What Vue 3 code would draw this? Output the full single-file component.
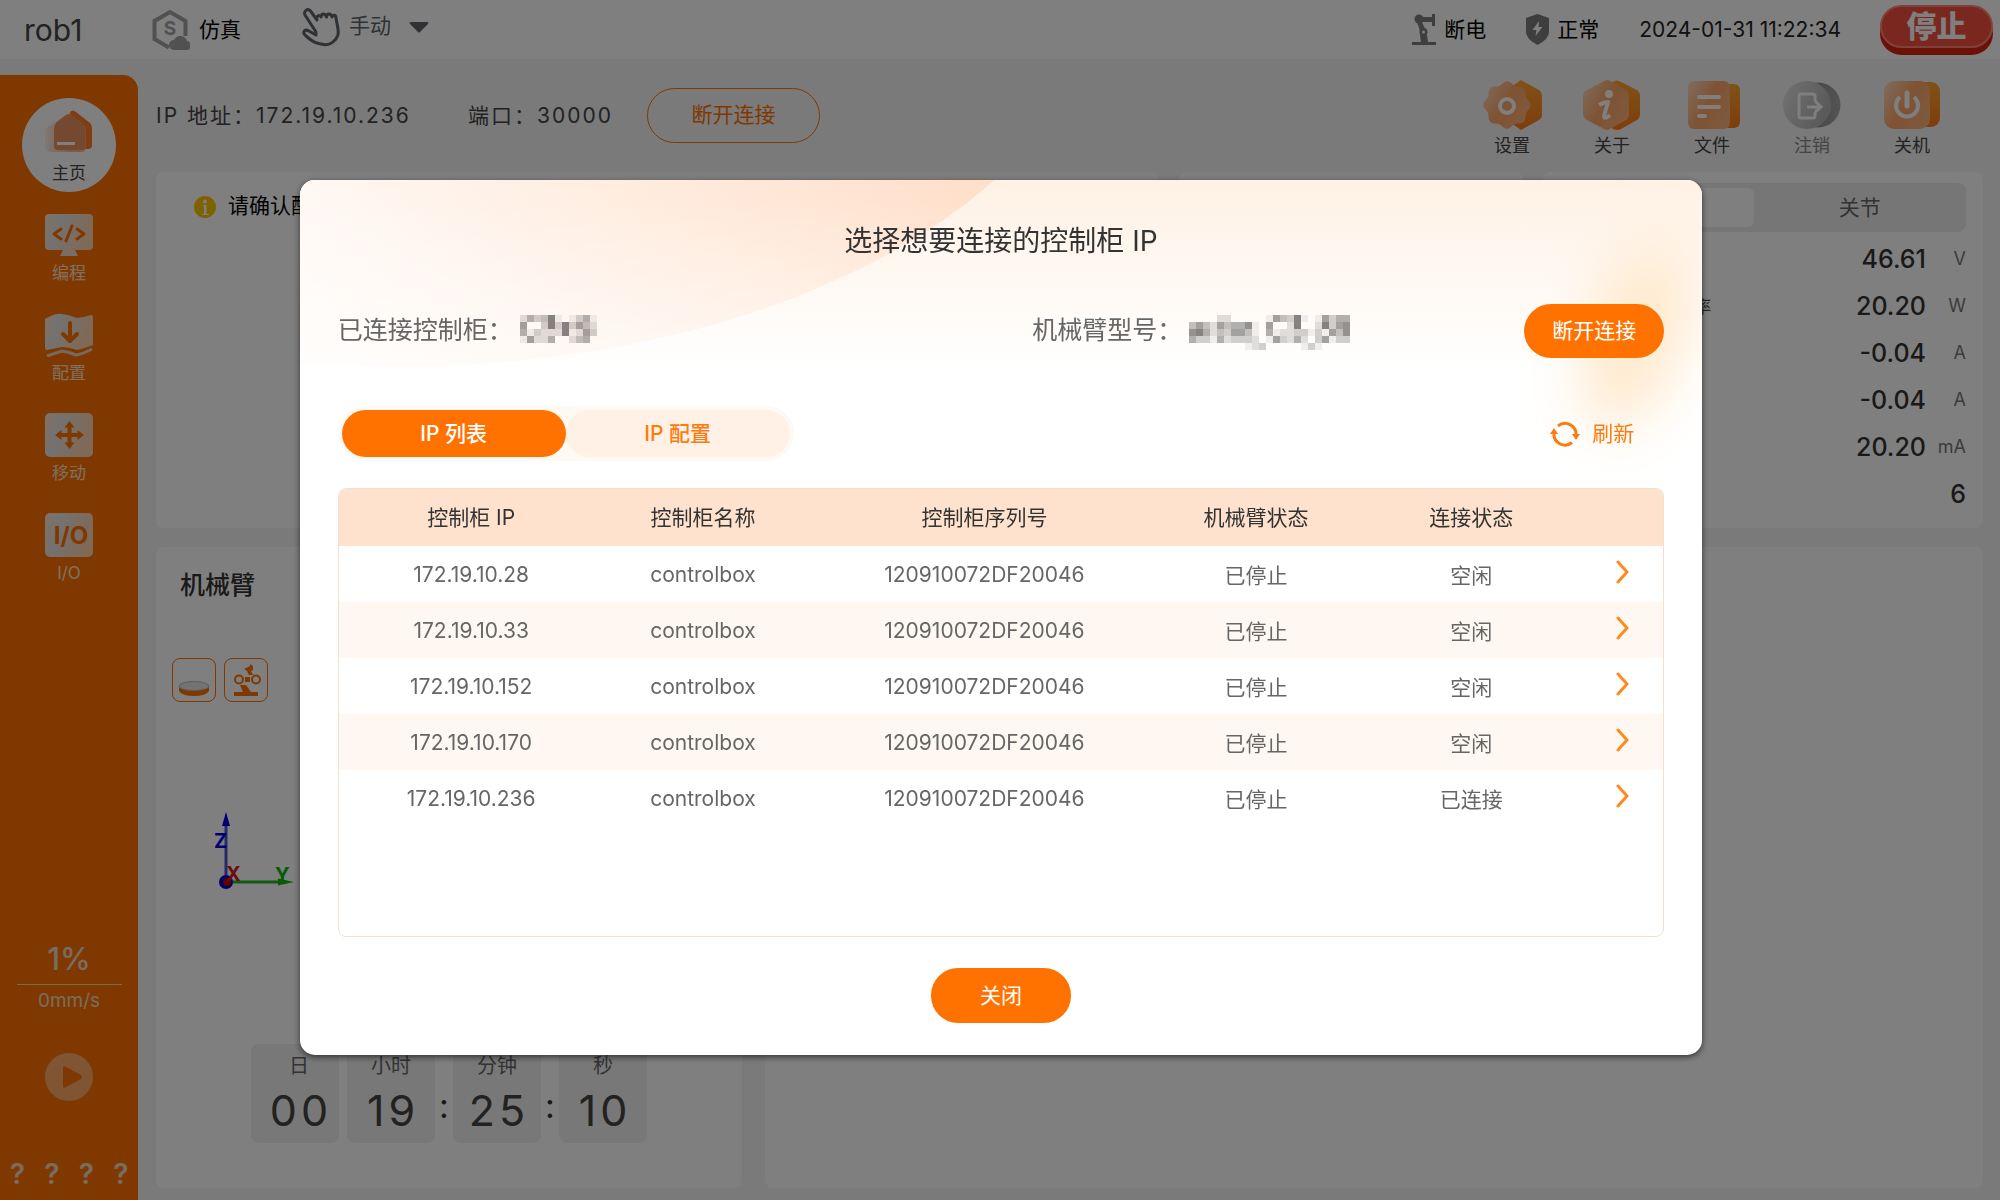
<script setup>
import { ref } from 'vue'

const mode = ref('手动')
const activeTab = ref('list')

const columns = ['控制柜 IP', '控制柜名称', '控制柜序列号', '机械臂状态', '连接状态']
const boxes = [
  { ip: '172.19.10.28', link: '空闲' },
  { ip: '172.19.10.33', link: '空闲' },
  { ip: '172.19.10.152', link: '空闲' },
  { ip: '172.19.10.170', link: '空闲' },
  { ip: '172.19.10.236', link: '已连接' },
].map((b) => ({ ...b, name: 'controlbox', serial: '120910072DF20046', arm: '已停止' }))

const readings = [
  { label: '', value: '46.61', unit: 'V' },
  { label: '功率', value: '20.20', unit: 'W' },
  { label: '', value: '-0.04', unit: 'A' },
  { label: '', value: '-0.04', unit: 'A' },
  { label: '', value: '20.20', unit: 'mA' },
  { label: '', value: '6', unit: '' },
]

// Redacted names: each digit is the darkness of one block
const toBlocks = (rows) =>
  rows.flatMap((row, y) => [...row].map((c, x) => ({ x: x * 7, y: y * 7, o: Number(c) * 0.06 })))
const cabinetMask = toBlocks(['25348101351', '60038383642', '51322281263', '16225002450'])
const armMask = toBlocks([
  '00002200000164381016355',
  '46426455710600280028367',
  '78524366410512233131647',
  '53315233320163252036133',
  '00000000123000001310000',
])

// Outline of the eight-lobed gear
const gearPath =
  Array.from({ length: 96 }, (_, i) => {
    const a = (i / 96) * Math.PI * 2
    const r = 22.2 + 1.6 * Math.cos(8 * a)
    return `${i ? 'L' : 'M'}${(25 + r * Math.cos(a)).toFixed(2)} ${(25 + r * Math.sin(a)).toFixed(2)}`
  }).join('') + 'Z'
</script>

<template>
  <div class="page">
    <svg class="defs" width="0" height="0" aria-hidden="true">
      <defs>
        <linearGradient id="gBack" x1="0" y1="0" x2="0" y2="1">
          <stop offset="0" stop-color="#ffa62e" /><stop offset="1" stop-color="#ff7a18" />
        </linearGradient>
        <linearGradient id="gFront" x1="0" y1="0" x2="1" y2="0.6">
          <stop offset="0" stop-color="#ffdcc0" /><stop offset="0.55" stop-color="#ffa566" /><stop offset="1" stop-color="#ffb27a" />
        </linearGradient>
        <linearGradient id="gGreyBack" x1="0" y1="0" x2="1" y2="0">
          <stop offset="0" stop-color="#777" /><stop offset="1" stop-color="#aaa" />
        </linearGradient>
        <linearGradient id="gGreyFront" x1="0" y1="0" x2="1" y2="0.4">
          <stop offset="0" stop-color="#e4e4e4" /><stop offset="1" stop-color="#b4b4b4" />
        </linearGradient>
        <linearGradient id="gPlate" x1="0" y1="0" x2="1" y2="0.3">
          <stop offset="0" stop-color="#ffe3cc" /><stop offset="0.35" stop-color="#e8e4e0" /><stop offset="1" stop-color="#ffd2ae" />
        </linearGradient>
        <linearGradient id="gHome" x1="0" y1="0" x2="1" y2="0">
          <stop offset="0" stop-color="#f3a570" stop-opacity="0.15" /><stop offset="0.6" stop-color="#f3a570" stop-opacity="0.8" />
        </linearGradient>
      </defs>
    </svg>

    <header class="topbar">
      <span class="robot-name">rob1</span>
      <span class="sim">
        <svg width="38" height="42" viewBox="0 0 38 42" fill="none">
          <path d="M17 38.500L2.500 30V12L18 3L33.500 12V27" stroke="#a2a2a2" stroke-width="4" />
          <text x="18" y="26" text-anchor="middle" class="hex-letter">S</text>
          <path d="M22 41a5 5 0 0 1 0-10 7 7 0 0 1 13 1 4.500 4.500 0 0 1-1 9z" fill="#a2a2a2" />
        </svg>
        <span class="caption">仿真</span>
      </span>
      <label class="mode">
        <svg width="38" height="40" viewBox="0 0 38 40" fill="none" stroke="#5e6268" stroke-width="3" stroke-linecap="round" stroke-linejoin="round">
          <path d="M14 25L3 8C1.500 4.500 5.500 .5 8.500 4L15 13C14 9 17 7 19 10C19.500 6 23 6 24.500 10C25 6 29 6 30 10C31 7 34 8 34 11C35 18 37 22 36 28C34 34 28 38.500 22 37.500C16 37 12 36 4 29C0 26 2 22 6 23.500L14 28Z" />
        </svg>
        <span class="mode-box">
          <select v-model="mode" aria-label="运行模式">
            <option>手动</option>
          </select>
          <svg class="caret" width="20" height="12" viewBox="0 0 20 12"><path d="M2 1H18Q20 1 19 3L11 11Q10 12 9 11L1 3Q0 1 2 1Z" fill="#5e6268" /></svg>
        </span>
      </label>
      <span class="state arm-state">
        <svg width="24" height="31" viewBox="0 0 24 31" fill="#7c7c7c">
          <circle cx="7" cy="5" r="4.500" /><path d="M7 3H20V0H23V12H20V8H7Z" /><path d="M5 8H10L14 17H8Z" />
          <circle cx="11.500" cy="18" r="4" /><circle cx="11.500" cy="18" r="1.500" fill="#fff" /><path d="M8 21H15L16 28H24V31H0V28H9Z" />
        </svg>
        <span class="caption">断电</span>
      </span>
      <span class="state">
        <svg width="23" height="31" viewBox="0 0 23 31"><path d="M11.500 0L23 4V18Q23 25 11.500 31Q0 25 0 18V4Z" fill="#7c7c7c" /><path d="M13 7L6.500 16H10.500L9.500 22L16.500 13H12.500Z" fill="#fff" /></svg>
        <span class="caption">正常</span>
      </span>
      <time class="clock">2024-01-31 11:22:34</time>
      <button class="stop" type="button">停止</button>
    </header>

    <div class="body">
      <nav class="sidebar">
        <a class="nav-home" href="#home">
          <svg width="48" height="46" viewBox="0 0 48 46">
            <path d="M25 2Q28-1 31 2L45 13Q47 15 47 18V35Q47 39 43 39H22Z" fill="#ff7a22" />
            <path d="M18 7Q23 1 28 6L38 14Q41 16 41 20V37Q41 42 36 42H6Q0 42 0 35V22Q0 18 6 15Z" fill="url(#gHome)" />
            <path d="M20 6Q24 3 28 6L37 13Q40 15 40 19V36Q40 40 36 40H13Q9 40 9 36V19Q9 15 12 12Z" fill="#e8935f" />
            <path d="M12 33.500H30" stroke="#fff" stroke-width="3" />
          </svg>
          <span>主页</span>
        </a>
        <a class="nav-item" href="#program">
          <svg width="48" height="44" viewBox="0 0 48 44" fill="none">
            <rect x="0" y="1" width="48" height="36" rx="4" fill="url(#gPlate)" />
            <path d="M18 37H30L33 43H15Z" fill="#f3dcc8" />
            <path d="M16 16L9 21L16 26M32 16L39 21L32 26M27 13L21 28" stroke="#ff7200" stroke-width="3" stroke-linecap="round" stroke-linejoin="round" />
          </svg>
          <span>编程</span>
        </a>
        <a class="nav-item" href="#config">
          <svg width="48" height="44" viewBox="0 0 48 44" fill="none">
            <path d="M0 6Q10 0 17 1Q25 2 32 5Q40 4 46 2Q48 2 48 5V32Q40 35 32 37Q24 34 17 34L2 37Q0 37 0 34Z" fill="url(#gPlate)" />
            <path d="M2 43L17 38Q24 39 31 42Q38 41 47 36" stroke="#ead3c0" stroke-width="3" />
            <path d="M25 10V27M18 21L25 28L32 21" stroke="#ff7200" stroke-width="4" stroke-linecap="round" stroke-linejoin="round" />
          </svg>
          <span>配置</span>
        </a>
        <a class="nav-item" href="#move">
          <svg width="48" height="44" viewBox="0 0 48 44">
            <rect width="48" height="44" rx="5" fill="url(#gPlate)" />
            <path d="M14 22H35M24.500 12V32" stroke="#ff7200" stroke-width="4" />
            <path d="M24.500 8L29.500 14.500H19.500ZM24.500 36L29.500 29.500H19.500ZM10 22L16.500 17V27ZM39 22L32.500 17V27Z" fill="#ff7200" />
          </svg>
          <span>移动</span>
        </a>
        <a class="nav-item" href="#io">
          <svg width="48" height="44" viewBox="0 0 48 44">
            <rect width="48" height="44" rx="5" fill="url(#gPlate)" />
            <text x="26" y="31" text-anchor="middle" class="io-letter">I/O</text>
          </svg>
          <span>I/O</span>
        </a>

        <div class="speed">
          <strong>1%</strong>
          <span>0mm/s</span>
        </div>
        <button class="play" type="button" aria-label="运行">
          <svg width="22" height="24" viewBox="0 0 22 24"><path d="M2 3Q2 0 5 2L20 10Q22 12 20 14L5 22Q2 24 2 21Z" fill="#ff7200" /></svg>
        </button>
        <div class="marks"><span v-for="n in 4" :key="n">?</span></div>
      </nav>

      <main class="content">
        <div class="toolbar">
          <div class="address">
            <span class="addr-ip">IP 地址：172.19.10.236</span>
            <span class="addr-port">端口：30000</span>
            <button class="outline" type="button">断开连接</button>
          </div>
          <div class="tools">
            <button type="button">
              <svg width="60" height="50" viewBox="0 0 60 50">
                <path d="M39 0L57 10Q60 12 60 15V35Q60 38 57 40L39 50L22 38V12Z" fill="url(#gBack)" />
                <path :d="gearPath" fill="url(#gFront)" /><circle cx="25" cy="26" r="7" fill="none" stroke="#fff" stroke-width="4" />
              </svg>
              设置
            </button>
            <button type="button">
              <svg width="60" height="50" viewBox="0 0 60 50">
                <path d="M31 2Q35-1 39 2L55 10Q58 12 58 16V34Q58 38 55 40L39 49Q35 51 31 49L20 40V10Z" fill="url(#gBack)" />
                <path d="M22 1Q25-1 28 1L44 10Q47 12 47 16V34Q47 38 44 40L28 49Q25 51 22 49L5 40Q1 38 1 34V16Q1 12 5 10Z" fill="url(#gFront)" />
                <circle cx="27" cy="14" r="4" fill="#fff" />
                <path d="M17 25Q22 22 26 22L22 36Q22 40 28 35" fill="none" stroke="#fff" stroke-width="4" stroke-linejoin="round" />
              </svg>
              关于
            </button>
            <button type="button">
              <svg width="60" height="50" viewBox="0 0 60 50">
                <rect x="22" y="4" width="36" height="44" rx="6" fill="url(#gBack)" />
                <rect x="6" y="1" width="42" height="48" rx="6" fill="url(#gFront)" />
                <path d="M17 17H37M17 27H37M17 36H23" stroke="#fff" stroke-width="4" stroke-linecap="round" />
              </svg>
              文件
            </button>
            <button type="button" class="muted" disabled>
              <svg width="60" height="50" viewBox="0 0 60 50">
                <circle cx="36" cy="25" r="22.500" fill="url(#gGreyBack)" /><circle cx="25" cy="25" r="24" fill="url(#gGreyFront)" />
                <path d="M33 21V16Q33 14 31 14H19Q17 14 17 16V36Q17 38 19 38H31Q33 38 33 36V32M25 27H38M33 21L39 27L33 32" fill="none" stroke="#fff" stroke-width="3" />
              </svg>
              注销
            </button>
            <button type="button">
              <svg width="60" height="50" viewBox="0 0 60 50">
                <rect x="20" y="2" width="38" height="45" rx="9" fill="url(#gBack)" />
                <rect x="2" y="1" width="46" height="48" rx="10" fill="url(#gFront)" />
                <path d="M18 17A11 11 0 1 0 32 17" fill="none" stroke="#fff" stroke-width="4" /><path d="M25 13V26" stroke="#fff" stroke-width="5" stroke-linecap="round" />
              </svg>
              关机
            </button>
          </div>
        </div>

        <div class="upper">
          <section class="card notice">
            <svg width="22" height="22" viewBox="0 0 22 22"><circle cx="11" cy="11" r="11" fill="#ffc400" /><circle cx="11" cy="5.500" r="2" fill="#fff" /><path d="M9 9H12.500V18H15V19H8V18H10V10H9Z" fill="#fff" /></svg>
            <p>请确认配</p>
          </section>
          <section class="card"></section>
          <section class="card readings">
            <div class="segment">
              <button type="button" class="on" aria-label="状态"></button>
              <button type="button">关节</button>
            </div>
            <dl>
              <div v-for="(r, i) in readings" :key="i">
                <dt>{{ r.label }}</dt>
                <dd>{{ r.value }}</dd>
                <dd v-if="r.unit" class="unit">{{ r.unit }}</dd>
              </div>
            </dl>
          </section>
        </div>

        <div class="lower">
          <section class="card arm">
            <h2>机械臂</h2>
            <div class="view-buttons">
              <button type="button" aria-label="底座">
                <svg width="32" height="36" viewBox="0 0 32 36"><path d="M1 24V29Q4 34 16 34Q28 34 31 29V24Z" fill="#ff7200" /><ellipse cx="16" cy="24" rx="15" ry="4.500" fill="#e6e6e6" stroke="#bbb" /></svg>
              </button>
              <button type="button" aria-label="机械臂视图">
                <svg width="30" height="36" viewBox="0 0 30 36">
                  <path d="M3 30H27V34H3ZM9 23H15L20 30H12ZM14 15H19V20H14ZM13 7L19 4V2L22 4V8L20 9L22 13H18L16 9Z" fill="#ff7200" />
                  <circle cx="8" cy="17.500" r="4" fill="none" stroke="#ff7200" stroke-width="2" /><circle cx="25" cy="17.500" r="4" fill="none" stroke="#ff7200" stroke-width="2" />
                </svg>
              </button>
            </div>
            <svg class="axes" width="84" height="80" viewBox="0 0 84 80">
              <path d="M16 70V12" stroke="#5050d8" stroke-width="3" /><path d="M16 0L20 14H12Z" fill="#0000e6" />
              <path d="M16 70H76" stroke="#20b820" stroke-width="3" /><path d="M84 70L68 66.500V73.500Z" fill="#0db80d" />
              <circle cx="16" cy="70" r="7" fill="#0000d0" /><circle cx="17" cy="70" r="4" fill="#c00000" />
              <text x="4" y="36" fill="#0000e6">Z</text><text x="16" y="69" fill="#e01818">X</text><text x="65" y="70" fill="#0db80d">Y</text>
            </svg>
            <div class="timer">
              <div class="tile"><span>日</span><b>00</b></div>
              <i class="gap"></i>
              <div class="tile"><span>小时</span><b>19</b></div>
              <i>:</i>
              <div class="tile"><span>分钟</span><b>25</b></div>
              <i>:</i>
              <div class="tile"><span>秒</span><b>10</b></div>
            </div>
          </section>
          <section class="card"></section>
        </div>
      </main>
    </div>

    <div class="overlay">
      <div class="modal" role="dialog" aria-modal="true" aria-labelledby="dialog-title">
        <svg class="modal-art" viewBox="0 0 1404 300" preserveAspectRatio="xMinYMin slice" aria-hidden="true">
          <defs>
            <linearGradient id="artTop" x1="0" y1="0" x2="0" y2="1">
              <stop offset="0" stop-color="#fff1e5" /><stop offset="1" stop-color="#fff" />
            </linearGradient>
            <linearGradient id="artArc" gradientUnits="userSpaceOnUse" x1="660" y1="0" x2="160" y2="330">
              <stop offset="0" stop-color="#ffe0cb" /><stop offset="1" stop-color="#fffaf6" />
            </linearGradient>
            <linearGradient id="artFade" gradientUnits="userSpaceOnUse" x1="0" y1="190" x2="0" y2="20">
              <stop offset="0" stop-color="#fff" stop-opacity=".6" /><stop offset="1" stop-color="#fff" stop-opacity="0" />
            </linearGradient>
            <filter id="artBlur" x="-150%" y="-60%" width="400%" height="220%"><feGaussianBlur stdDeviation="28" /></filter>
          </defs>
          <rect width="1404" height="190" fill="url(#artTop)" />
          <ellipse cx="102" cy="-214" rx="702" ry="400" fill="url(#artArc)" />
          <ellipse cx="102" cy="-214" rx="702" ry="400" fill="url(#artFade)" />
          <ellipse cx="1336" cy="156" rx="48" ry="96" transform="rotate(18 1336 156)" fill="#ffe9cd" filter="url(#artBlur)" />
        </svg>

        <h1 id="dialog-title">选择想要连接的控制柜 IP</h1>

        <div class="info">
          <div>
            <span class="caption">已连接控制柜：</span>
            <svg width="77" height="28" viewBox="0 0 77 28" shape-rendering="crispEdges"><rect v-for="(b, i) in cabinetMask" :key="i" :x="b.x" :y="b.y" width="7" height="7" :fill-opacity="b.o" /></svg>
          </div>
          <div>
            <span class="caption">机械臂型号：</span>
            <svg width="161" height="35" viewBox="0 0 161 35" shape-rendering="crispEdges"><rect v-for="(b, i) in armMask" :key="i" :x="b.x" :y="b.y" width="7" height="7" :fill-opacity="b.o" /></svg>
          </div>
          <button class="solid" type="button">断开连接</button>
        </div>

        <div class="tab-row">
          <div class="tabs" role="tablist">
            <button type="button" role="tab" :aria-selected="activeTab === 'list'" :class="{ on: activeTab === 'list' }" @click="activeTab = 'list'">IP 列表</button>
            <button type="button" role="tab" :aria-selected="activeTab === 'config'" :class="{ on: activeTab === 'config' }" @click="activeTab = 'config'">IP 配置</button>
          </div>
          <button class="refresh" type="button">
            <svg width="30" height="26" viewBox="0 0 30 26" fill="none" stroke="#ff7a0c" stroke-width="3">
              <path d="M8 5A11 11 0 0 1 26 14M22 21.500A11 11 0 0 1 4 12" />
              <path d="M22 13H30L26 19ZM0 13H8L4 7Z" fill="#ff7a0c" stroke="none" />
            </svg>
            <span class="caption">刷新</span>
          </button>
        </div>

        <div class="table-box">
          <table>
            <colgroup><col class="c1" /><col class="c2" /><col class="c3" /><col class="c4" /><col class="c5" /><col /></colgroup>
            <thead>
              <tr><th v-for="c in columns" :key="c" scope="col">{{ c }}</th><th></th></tr>
            </thead>
            <tbody>
              <tr v-for="b in boxes" :key="b.ip">
                <td>{{ b.ip }}</td><td>{{ b.name }}</td><td>{{ b.serial }}</td><td>{{ b.arm }}</td><td>{{ b.link }}</td>
                <td class="go">
                  <button type="button" :aria-label="'连接 ' + b.ip">
                    <svg width="14" height="24" viewBox="0 0 14 24"><path d="M2 2L11 12L2 22" fill="none" stroke="#ff8a1e" stroke-width="3" stroke-linecap="round" stroke-linejoin="round" /></svg>
                  </button>
                </td>
              </tr>
            </tbody>
          </table>
        </div>

        <button class="solid close" type="button">关闭</button>
      </div>
    </div>
  </div>
</template>

<style>
body {
  margin: 0;
  background: #f4f4f4;
}
</style>

<style scoped>
.page,
.page * {
  box-sizing: border-box;
}
.page {
  display: flex;
  flex-direction: column;
  min-height: 100vh;
  font-family: Inter, "Noto Sans CJK SC", sans-serif;
  font-size: 21px;
  color: #333;
  background: #f4f4f4;
}
.page button,
.page select {
  font: inherit;
  color: inherit;
  background: none;
  border: 0;
  padding: 0;
  margin: 0;
}
.page svg {
  display: block;
  flex: none;
}
.defs {
  position: absolute;
}
h1,
h2,
p,
dl,
dd {
  margin: 0;
}
.caption {
  padding-bottom: 4px;
}

/* top bar */
.topbar {
  display: flex;
  align-items: center;
  height: 59px;
  padding: 0 7px 0 24px;
  background: #fff;
  color: #000;
}
.robot-name {
  width: 128px;
  font-size: 30px;
  color: #444;
}
.sim {
  display: flex;
  align-items: center;
  gap: 9px;
  width: 150px;
}
.hex-letter {
  font-size: 19px;
  font-weight: 700;
  fill: #a2a2a2;
}
.mode {
  display: flex;
  align-items: center;
  gap: 9px;
  padding-bottom: 6px;
}
.mode-box {
  display: grid;
  align-items: center;
}
.page .mode-box select {
  grid-area: 1 / 1;
  width: 80px;
  padding-bottom: 2px;
  appearance: none;
  color: #5e6268;
}
.caret {
  grid-area: 1 / 1;
  justify-self: end;
  pointer-events: none;
}
.state {
  display: flex;
  align-items: center;
  gap: 8px;
  margin-right: 40px;
}
.arm-state {
  margin-left: auto;
}
.clock {
  margin-right: 39px;
  color: #222;
}
.page .stop {
  width: 113px;
  height: 43px;
  margin-bottom: 7px;
  border: 2px solid #ff8273;
  border-radius: 22px;
  background: #f4513f;
  box-shadow: 0 7px 0 #d8220f;
  color: #fff;
  font-size: 30px;
  font-weight: 900;
  line-height: 39px;
}

/* side bar */
.body {
  display: flex;
  flex: 1;
}
.sidebar {
  display: flex;
  flex-direction: column;
  align-items: center;
  flex: none;
  width: 138px;
  margin-top: 16px;
  padding: 23px 0 12px;
  border-radius: 0 15px 0 0;
  background: #ff7200;
  color: #f3d9c3;
  font-size: 17px;
}
.sidebar a {
  display: flex;
  flex-direction: column;
  align-items: center;
  text-decoration: none;
  color: #ffe0c6;
  line-height: 22px;
}
.sidebar .nav-home {
  width: 94px;
  height: 94px;
  padding-top: 12px;
  margin-bottom: 21px;
  gap: 6px;
  border-radius: 50%;
  background: #fff;
  color: #444;
}
.nav-item {
  gap: 5px;
  margin-bottom: 29px;
}
.io-letter {
  font-size: 24px;
  font-weight: 700;
  fill: #ff7200;
}
.speed {
  width: 105px;
  margin-top: auto;
  text-align: center;
}
.speed strong {
  display: block;
  padding-bottom: 5px;
  border-bottom: 1px solid #ffd0a8;
  font-size: 31px;
  font-weight: 500;
  line-height: 40px;
}
.speed span {
  display: block;
  padding-top: 4px;
  font-size: 19px;
  line-height: 24px;
}
.page .play {
  display: flex;
  align-items: center;
  justify-content: center;
  width: 48px;
  height: 48px;
  margin: 40px 0 59px;
  padding-left: 5px;
  border-radius: 50%;
  background: #ffaa66;
}
.marks {
  display: flex;
  justify-content: space-around;
  width: 100%;
  font-size: 28px;
  font-weight: 600;
  line-height: 28px;
}

/* page content */
.content {
  display: flex;
  flex-direction: column;
  flex: 1;
  padding: 0 17px 12px 18px;
}
.toolbar {
  display: flex;
  justify-content: space-between;
  padding: 21px 21px 16px 0;
}
.address {
  display: flex;
  align-items: center;
  height: 70px;
  color: #444;
  letter-spacing: 2px;
}
.addr-ip {
  width: 312px;
  padding-bottom: 2px;
}
.addr-port {
  width: 179px;
  padding-bottom: 2px;
}
.page .outline {
  width: 173px;
  height: 55px;
  padding-bottom: 4px;
  border: 1px solid #ff7200;
  border-radius: 28px;
  color: #ff7200;
}
.tools {
  display: flex;
}
.page .tools button {
  display: flex;
  flex-direction: column;
  align-items: center;
  gap: 5px;
  width: 100px;
  height: 76px;
  color: #444;
  font-size: 18px;
  line-height: 22px;
}
.page .tools .muted {
  color: #888;
}
.card {
  border-radius: 8px;
  background: #fff;
}
.upper {
  display: grid;
  grid-template-columns: 1004fr 344fr 440fr;
  gap: 20px;
  min-height: 356px;
}
.notice {
  display: flex;
  gap: 12px;
  padding: 24px 38px;
  line-height: 20px;
  color: #000;
}
.readings {
  padding: 11px 17px;
}
.segment {
  display: flex;
  height: 49px;
  margin-bottom: 3px;
  padding: 5px 0 5px 5px;
  border-radius: 8px;
  background: #ececec;
}
.page .segment button {
  flex: 1;
  padding-bottom: 4px;
  border-radius: 6px;
  color: #666;
}
.page .segment .on {
  flex: 0 0 47%;
  background: #fff;
}
.readings dl div {
  display: flex;
  align-items: center;
  height: 47px;
}
.readings dt {
  flex: 1;
  padding-left: 117px;
  font-size: 17px;
  color: #555;
}
.readings dd {
  font-size: 25px;
  font-weight: 500;
  color: #333;
}
.readings .unit {
  width: 40px;
  text-align: right;
  font-size: 18px;
  font-weight: 400;
  color: #777;
}
.lower {
  display: grid;
  grid-template-columns: 586fr 1218fr;
  gap: 23px;
  flex: 1;
  margin-top: 19px;
}
.arm {
  display: flex;
  flex-direction: column;
  padding: 22px 16px 45px;
}
.arm h2 {
  padding-left: 8px;
  font-size: 25px;
  font-weight: 500;
  line-height: 32px;
}
.view-buttons {
  display: flex;
  gap: 8px;
  margin-top: 57px;
}
.page .view-buttons button {
  display: flex;
  align-items: center;
  justify-content: center;
  width: 44px;
  height: 44px;
  border: 1px solid #ff7200;
  border-radius: 8px;
}
.axes {
  margin: 110px 0 0 38px;
  font-size: 20px;
  font-weight: 700;
}
.timer {
  display: flex;
  margin-top: auto;
  padding-left: 79px;
}
.tile {
  display: flex;
  flex-direction: column;
  align-items: center;
  width: 88px;
  height: 99px;
  padding-top: 10px;
  border-radius: 8px;
  background: #f0f0f0;
  line-height: 24px;
  color: #666;
}
.tile:first-child {
  padding-left: 8px;
}
.tile span {
  font-size: 20px;
}
.tile b {
  margin-top: 7px;
  padding-left: 4px;
  font-size: 43px;
  font-weight: 400;
  line-height: 50px;
  letter-spacing: 4px;
  color: #444;
}
.timer i {
  width: 18px;
  padding-top: 38px;
  text-align: center;
  font-size: 34px;
  font-style: normal;
  line-height: 48px;
}
.timer .gap {
  width: 8px;
}

/* dialog */
.overlay {
  position: fixed;
  inset: 0;
  display: flex;
  align-items: flex-start;
  justify-content: center;
  padding: 180px 0 0 2px;
  overflow: auto;
  background: rgba(0, 0, 0, 0.5);
}
.modal {
  position: relative;
  display: flex;
  flex-direction: column;
  width: calc(70% + 4px);
  min-width: 1100px;
  padding: 41px 38px 32px;
  border-radius: 15px;
  background: #fff;
  box-shadow: 0 2px 6px rgba(0, 0, 0, 0.6);
}
.modal-art {
  position: absolute;
  top: 0;
  left: 0;
  width: 100%;
  border-radius: 15px;
}
.modal > :not(.modal-art) {
  position: relative;
}
.modal h1 {
  text-align: center;
  font-size: 28px;
  font-weight: 400;
  line-height: 40px;
}
.info {
  display: grid;
  grid-template-columns: 1fr 492px auto;
  align-items: start;
  margin-top: 43px;
  font-size: 25px;
  color: #666;
}
.info div {
  display: flex;
  align-items: flex-start;
  gap: 7px;
  padding-top: 11px;
  line-height: 30px;
}
.info svg {
  fill: #000;
}
.page .solid {
  width: 140px;
  height: 54px;
  padding-bottom: 4px;
  border-radius: 27px;
  background: #ff7200;
  color: #fff;
  font-size: 21px;
}
.tab-row {
  display: flex;
  align-items: center;
  justify-content: space-between;
  margin-top: 48px;
}
.tabs {
  display: flex;
  padding: 4px;
  border-radius: 28px;
  background: #fff9f3;
}
.page .tabs button {
  width: 224px;
  height: 47px;
  padding-bottom: 4px;
  border-radius: 24px;
  background: #fff1e6;
  color: #ff7a0c;
  font-weight: 500;
}
.page .tabs .on {
  background: #ff7200;
  color: #fff;
}
.page .refresh {
  display: flex;
  align-items: center;
  gap: 12px;
  margin-right: 30px;
  color: #ff7a0c;
}
.table-box {
  min-height: 449px;
  margin-top: 27px;
  overflow: hidden;
  border: 1px solid #f1e2cf;
  border-radius: 8px;
  background: #fff;
}
table {
  width: 100%;
  border-collapse: collapse;
  table-layout: fixed;
}
.c1 { width: 20%; }
.c2 { width: 15%; }
.c3 { width: 27.5%; }
.c4 { width: 13.5%; }
.c5 { width: 19%; }
th,
td {
  height: 56px;
  padding: 0;
  text-align: center;
  font-weight: 400;
}
th {
  height: 57px;
  padding-bottom: 4px;
  color: #333;
}
td {
  color: #666;
}
thead tr {
  background: #ffe2cd;
}
tbody tr:nth-child(even) {
  background: #fff8f2;
}
.go button {
  display: inline-block;
  margin-right: 14px;
}
.page .close {
  align-self: center;
  height: 55px;
  margin-top: 31px;
}
</style>
